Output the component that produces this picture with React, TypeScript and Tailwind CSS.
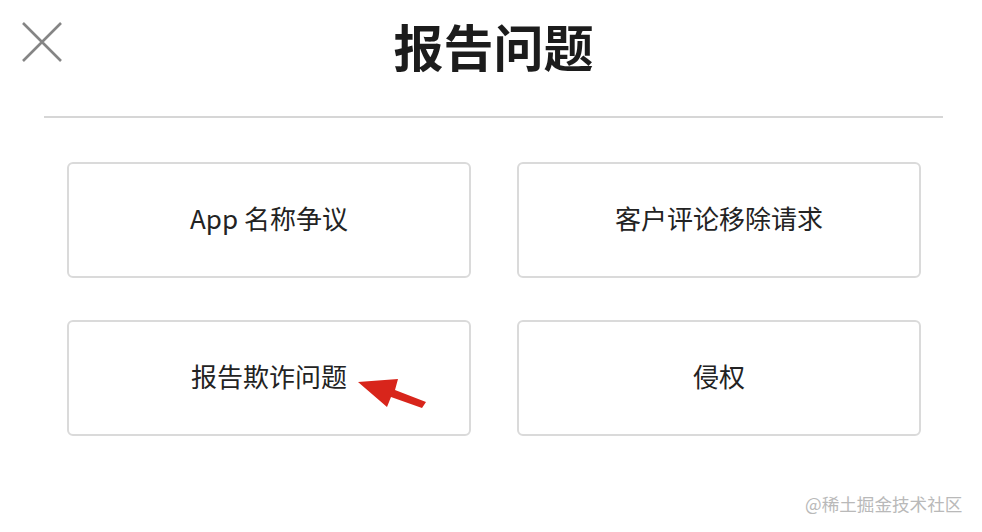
const cards = ["App 名称争议", "客户评论移除请求", "报告欺诈问题", "侵权"];

function CloseIcon() {
  return (
    <svg width="40" height="40" viewBox="0 0 40 40" fill="none">
      <path d="M1 1L39 39M39 1L1 39" stroke="#858585" strokeWidth="2.6" />
    </svg>
  );
}

function RedArrow() {
  return (
    <svg
      className="absolute left-[350px] top-[372px]"
      width="84"
      height="44"
      viewBox="350 372 84 44"
    >
      <polygon
        points="358,382 398,379 395,390 426,402 422,408 391,397 387,407"
        fill="#d8251b"
      />
    </svg>
  );
}

export default function App() {
  return (
    <div
      className="relative w-[982px] h-[532px] bg-white overflow-hidden"
      style={{ fontFamily: '"Noto Sans CJK SC", "Noto Sans", sans-serif' }}
    >
      {/* header */}
      <div className="grid grid-cols-[1fr_auto_1fr] h-[116px]">
        <div className="pl-[22px] pt-[22px]">
          <CloseIcon />
        </div>
        <h1 className="pt-[13px] text-[50px] leading-[64px] font-bold text-[#1c1c1c] pl-[5px]">
          报告问题
        </h1>
        <div />
      </div>
      <div className="ml-[44px] w-[899px] h-[2px] bg-[#d6d6d6]" />

      {/* options */}
      <div className="ml-[67px] mt-[44px] grid grid-cols-[404px_404px] gap-x-[46px] gap-y-[42px]">
        {cards.map((label) => (
          <div
            key={label}
            className="h-[116px] border-2 border-[#dadada] rounded-[6px] flex items-center justify-center pb-[5px] text-[26px] text-[#232323]"
          >
            {label}
          </div>
        ))}
      </div>

      <RedArrow />

      <div className="absolute left-[805px] top-[492px] text-[17.6px] leading-[24px] text-[#b9b9b9]">
        @稀土掘金技术社区
      </div>
    </div>
  );
}
